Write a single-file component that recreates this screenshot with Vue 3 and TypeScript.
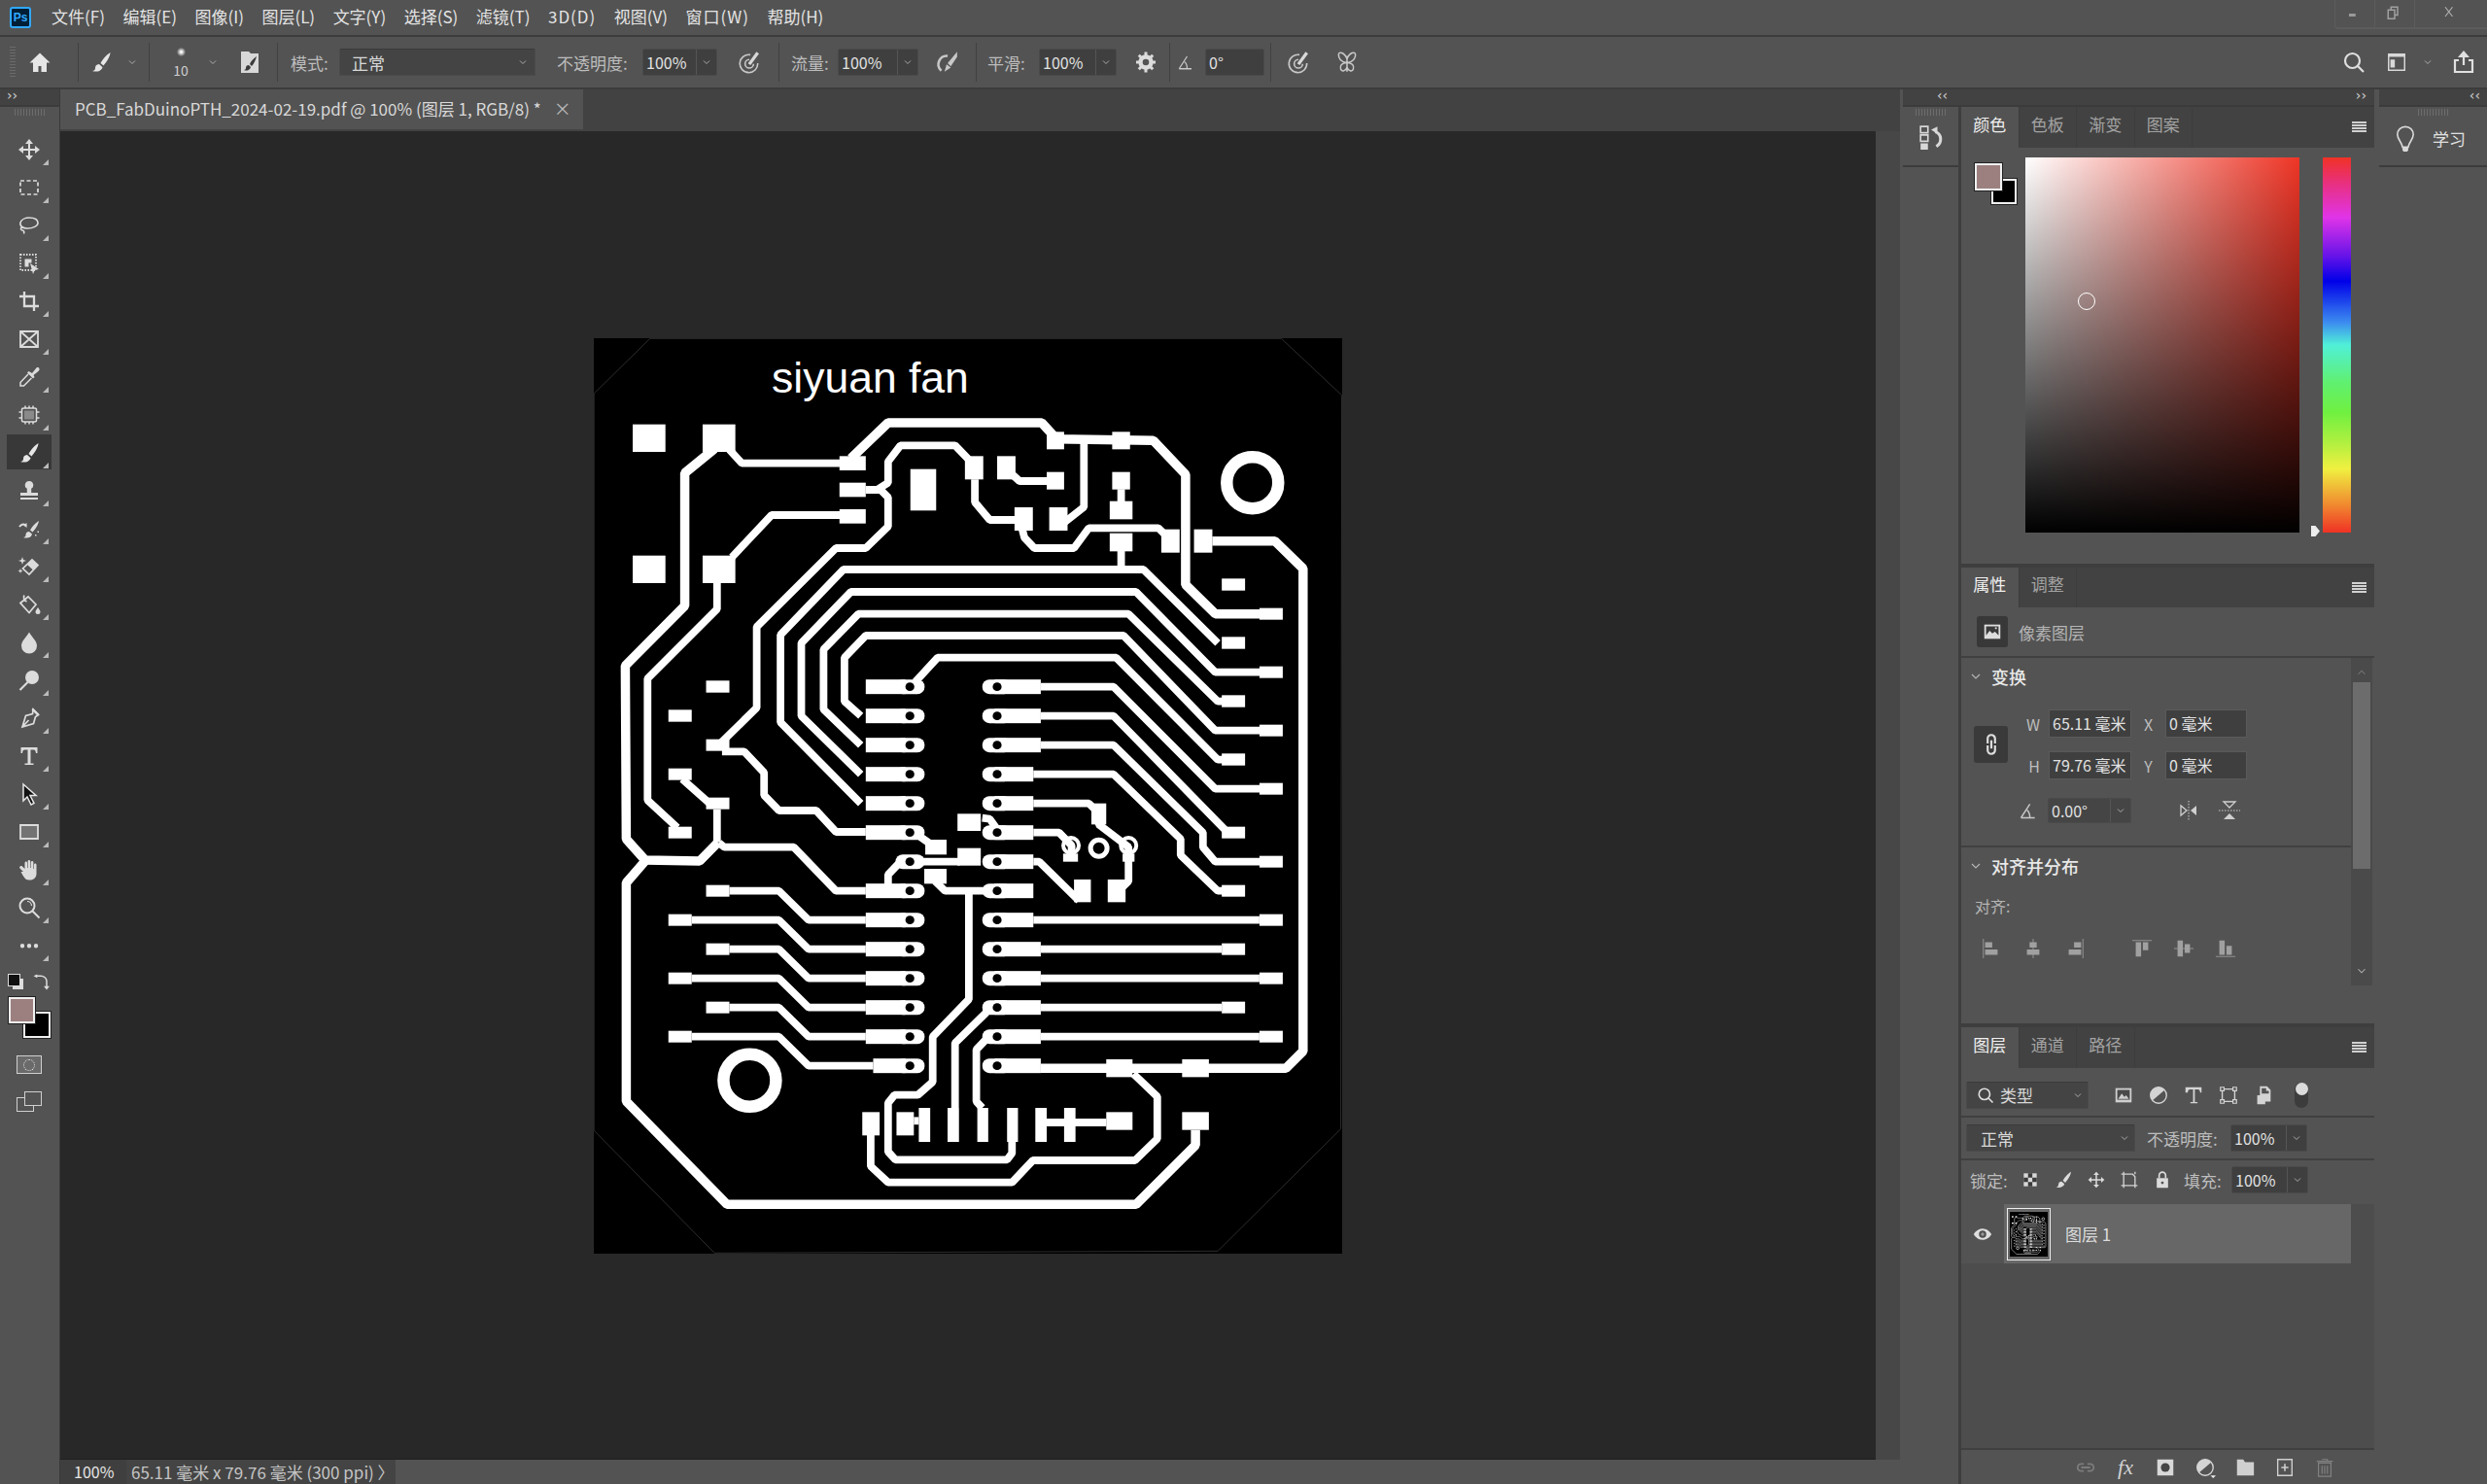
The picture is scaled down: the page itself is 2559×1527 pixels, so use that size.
<template>
  <div class="app">
    <!-- menu bar -->
    <header class="menubar">
      <div class="ps-logo">Ps</div>
      <nav class="menu">
        <span v-for="m in menus" :key="m">{{ m }}</span>
      </nav>
      <div class="winctl">
        <button class="win-btn"><Ico name="winMin" :size="18" /></button>
        <button class="win-btn"><Ico name="winMax" :size="18" /></button>
        <button class="win-btn"><Ico name="winClose" :size="18" /></button>
      </div>
    </header>

    <!-- tool options -->
    <section class="options">
      <div class="og og-home"><i class="grip-v"></i><Ico name="home" :size="24" /></div>
      <div class="og og-brush"><Ico name="brush" :size="24" /><Ico name="chev" :size="12" /></div>
      <div class="og og-preset">
        <div class="preset"><i class="dot"></i><span>10</span></div>
        <Ico name="chev" :size="12" />
        <Ico class="toggle" name="paperBrush" :size="24" />
      </div>
      <div class="og og-mode">
        <span class="lbl lbl-mode">模式:</span>
        <div class="sel sel-mode"><span>正常</span><Ico name="chev" :size="12" /></div>
        <span class="lbl lbl-op">不透明度:</span>
        <div class="num num-op"><b>100%</b><em><Ico name="chev" :size="12" /></em></div>
        <Ico class="push" name="airTarget" :size="26" />
      </div>
      <div class="og og-flow">
        <span class="lbl lbl-flow">流量:</span>
        <div class="num num-flow"><b>100%</b><em><Ico name="chev" :size="12" /></em></div>
        <Ico class="push-sm" name="airbrush" :size="26" />
      </div>
      <div class="og og-smooth">
        <span class="lbl lbl-smooth">平滑:</span>
        <div class="num num-smooth"><b>100%</b><em><Ico name="chev" :size="12" /></em></div>
        <Ico class="push-sm" name="gear" :size="24" />
      </div>
      <div class="og og-angle">
        <Ico name="angle" :size="18" />
        <div class="num num-angle"><b>0°</b></div>
      </div>
      <div class="og og-sym">
        <Ico name="airTarget" :size="26" />
        <Ico name="butterfly" :size="26" />
      </div>
      <div class="og-right">
        <Ico name="search" :size="24" />
        <Ico class="ws" name="workspace" :size="22" />
        <Ico class="ws-chev" name="chev" :size="12" />
        <Ico class="shr" name="share" :size="24" />
      </div>
    </section>

    <main class="work">
      <!-- toolbox -->
      <aside class="toolbox">
        <div class="collapse collapse-l"><span>››</span></div>
        <i class="grip-h"></i>
        <div class="tools">
          <div v-for="t in tools" :key="t" class="tool" :class="{ active: t === 'brush' }">
            <span class="tool-in"><Ico :name="t" :size="24" /></span>
          </div>
        </div>
        <div class="swatches">
          <i class="mini-default"></i>
          <Ico class="swap" name="swap" :size="18" />
          <i class="sw sw-bg"></i>
          <i class="sw sw-fg"></i>
        </div>
        <div class="t-mask"><i></i></div>
        <div class="t-screen"><i></i><i></i></div>
      </aside>

      <!-- document area -->
      <section class="center">
        <div class="tabbar">
          <div class="doc-tab">
            <span>PCB_FabDuinoPTH_2024-02-19.pdf @ 100% (图层 1, RGB/8) *</span>
            <em>×</em>
          </div>
        </div>
        <div class="stage">
          <div class="canvas">
            <svg class="board" width="770" height="942" viewBox="611 348 770 942">
              <rect x="611" y="348" width="770" height="942" fill="#000" />
              <polyline :points="outline" fill="none" stroke="#2d2d2d" stroke-width="1" />
              <g id="pcb-art">
                <text x="794" y="404" class="sign" fill="#fff">siyuan fan</text>
                <polyline v-for="(t, i) in tracePoints" :key="'t' + i" :points="t" fill="none" stroke="#fff" :stroke-width="thick.includes(i) ? 9.5 : 7.8" stroke-linejoin="bevel" />
                <rect v-for="(r, i) in padRects" :key="'r' + i" :x="r.x" :y="r.y" :width="r.w" :height="r.h" fill="#fff" />
                <g v-for="(p, i) in pills" :key="'p' + i">
                  <rect :x="p.x" :y="p.y" :width="p.w" height="15" rx="7.5" fill="#fff" />
                  <rect v-if="p.sq" :x="p.sq.x" :y="p.y" :width="p.sq.w" height="15" fill="#fff" />
                  <ellipse :cx="p.hx" :cy="p.y + 7.5" rx="4.6" ry="4.4" fill="#000" />
                </g>
                <ellipse v-for="(c, i) in rings" :key="'c' + i" :cx="c.x" :cy="c.y" :rx="c.r" :ry="c.r" fill="none" stroke="#fff" :stroke-width="c.w" />
              </g>
            </svg>
          </div>
          <div class="vscroll"></div>
        </div>
        <footer class="status">
          <span class="st-zoom">100%</span>
          <span class="st-info">65.11 毫米 x 79.76 毫米 (300 ppi) 〉</span>
        </footer>
      </section>

      <!-- docks -->
      <section class="dock">
        <div class="collapse collapse-dock"><span>‹‹</span><span>››</span></div>
        <div class="dock-cols">
          <div class="mini-col">
            <div class="mini-panel">
              <i class="grip-h grip-c"></i>
              <Ico name="history" :size="26" />
            </div>
          </div>

          <div class="panels">
            <!-- colour -->
            <section class="panel p-color">
              <div class="tabs">
                <span class="tab on">颜色</span><span class="tab">色板</span><span class="tab">渐变</span><span class="tab">图案</span>
                <i class="burger"></i>
              </div>
              <div class="color-body">
                <div class="c-swatches"><i class="sw sw-bg"></i><i class="sw sw-fg"></i></div>
                <div class="picker"><i class="pick-ring"></i></div>
                <div class="hue"><i class="hue-mark"></i></div>
              </div>
            </section>

            <!-- properties -->
            <section class="panel p-props">
              <div class="tabs">
                <span class="tab on">属性</span><span class="tab">调整</span>
                <i class="burger"></i>
              </div>
              <div class="kind">
                <span class="kind-ico"><Ico name="picture" :size="22" /></span>
                <span>像素图层</span>
              </div>
              <div class="props-body">
                <div class="props-main">
                  <div class="sec sec-xform">
                    <h3><Ico name="chev" :size="16" />变换</h3>
                    <div class="wh">
                      <span class="link"><Ico name="link" :size="26" /></span>
                      <div class="wh-grid">
                        <label>W</label><div class="field">65.11 毫米</div>
                        <label class="c">X</label><div class="field">0 毫米</div>
                        <label>H</label><div class="field">79.76 毫米</div>
                        <label class="c">Y</label><div class="field">0 毫米</div>
                      </div>
                    </div>
                    <div class="ang">
                      <Ico name="angle" :size="20" />
                      <div class="num num-ang"><b>0.00°</b><em><Ico name="chev" :size="12" /></em></div>
                      <Ico class="flip" name="flipH" :size="24" />
                      <Ico class="flip2" name="flipV" :size="24" />
                    </div>
                  </div>
                  <div class="sec">
                    <h3><Ico name="chev" :size="16" />对齐并分布</h3>
                    <p class="align-lbl">对齐:</p>
                    <div class="aligns">
                      <Ico v-for="a in aligns" :key="a" :class="{ wide: a === 'aT' }" :name="a" :size="22" />
                    </div>
                  </div>
                </div>
                <div class="pscroll">
                  <Ico name="chevUp" :size="14" />
                  <i class="thumb"></i>
                  <Ico class="down" name="chev" :size="14" />
                </div>
              </div>
            </section>

            <!-- layers -->
            <section class="panel p-layers">
              <div class="tabs">
                <span class="tab on">图层</span><span class="tab">通道</span><span class="tab">路径</span>
                <i class="burger"></i>
              </div>
              <div class="row r-filter">
                <div class="sel sel-type"><Ico name="search" :size="18" /><span>类型</span><Ico class="end" name="chev" :size="12" /></div>
                <div class="filters">
                  <Ico v-for="f in filters" :key="f" :name="f" :size="22" />
                </div>
                <div class="fswitch"><i></i></div>
              </div>
              <div class="row r-blend">
                <div class="sel sel-blend"><span>正常</span><Ico class="end" name="chev" :size="12" /></div>
                <span class="lbl lbl-op2">不透明度:</span>
                <div class="num num-lay"><b>100%</b><em><Ico name="chev" :size="12" /></em></div>
              </div>
              <div class="row r-lock">
                <span class="lbl">锁定:</span>
                <div class="locks"><Ico v-for="l in locks" :key="l" :name="l" :size="20" /></div>
                <span class="lbl lbl-fill">填充:</span>
                <div class="num num-lay"><b>100%</b><em><Ico name="chev" :size="12" /></em></div>
              </div>
              <div class="list">
                <div class="layer-row">
                  <span class="eye"><Ico name="eye" :size="20" /></span>
                  <div class="layer">
                    <span class="thumbw">
                      <svg width="39" height="46" viewBox="611 348 770 942" preserveAspectRatio="none"><rect x="611" y="348" width="770" height="942" fill="#000" /><use href="#pcb-art" /></svg>
                    </span>
                    <span class="lname">图层 1</span>
                  </div>
                </div>
              </div>
              <footer class="lfoot">
                <Ico name="chain" :size="22" />
                <span class="fx">fx</span>
                <Ico name="mask" :size="22" />
                <Ico name="adjust" :size="22" />
                <Ico name="folder" :size="22" />
                <Ico name="newLayer" :size="22" />
                <Ico name="trash" :size="22" />
              </footer>
            </section>
          </div>
        </div>
      </section>

      <aside class="learn">
        <div class="collapse collapse-r"><span>‹‹</span></div>
        <div class="learn-panel">
          <i class="grip-h grip-c"></i>
          <div class="learn-in"><Ico name="bulb" :size="28" /><span>学习</span></div>
        </div>
      </aside>
    </main>
  </div>
</template>

<script setup lang="ts">
import { h, type FunctionalComponent } from 'vue'

// one icon = a filled part (f) and/or a stroked part (s)
interface Part { f?: string; s?: string; w?: number; dash?: string; fc?: string; bg?: string; c?: string }

const brushF = 'M21.5 2c-3.5 2-8 7-10 11l3 2.5c3-3.5 7-9.5 7-13.5zM10 14c-3 .2-4 2-4 4 0 1.800-1 2.800-3 3 3 1.200 9 1 10.500-3.800z'

const icons: Record<string, Part[]> = {
  winMin: [{ f: 'M4 12h9v4H4z', fc: '#9a9a9a' }],
  winMax: [{ s: 'M7 7V3h9v11h-4M3 7h9v12H3z', w: 2, c: '#a0a0a0' }],
  winClose: [{ s: 'M4 3l10 13M14 3L4 16', w: 1.6, c: '#b0b0b0' }],
  chev: [{ s: 'M6 9l6 6 6-6', w: 1.8, c: '#b4b4b4' }],
  chevUp: [{ s: 'M6 15l6-6 6 6', w: 1.8, c: '#777' }],
  home: [{ f: 'M12 2.500L1.500 12.500H5V22h5.500v-6h3v6H19v-9.500h3.500z', fc: '#e6e6e6' }],
  brush: [{ f: brushF, fc: '#e6e6e6' }],
  paperBrush: [{ f: 'M3 1h8l2 2h8v20H3z', fc: '#d8d8d8' }, { f: 'M19 6c-3 2-6 5-7 8l2 2c2-2 4-6 5-10zM11 15c-2 0-3 1-3 3 0 1-1 2-2 2 2 1 6 1 7-3z', fc: '#3a3a3a' }],
  airTarget: [{ s: 'M13 5a8.500 8.500 0 1 0 7 8M12 9.500a4 4 0 1 0 4 4', w: 1.5, c: '#c8c8c8' }, { s: 'M12 14L20 3', w: 3, c: '#d8d8d8' }],
  airbrush: [{ s: 'M13 6a8 8 0 0 0-6 14', w: 2.400, c: '#c8c8c8' }, { f: 'M22 2l-9 11 3 3 6-9zM12 14l-2 7 6-4z', fc: '#c8c8c8' }],
  gear: [{ s: 'M12 6.500a5.500 5.500 0 1 0 0 11 5.500 5.500 0 0 0 0-11z', w: 4.400, c: '#dcdcdc' }, { s: 'M12 1.500v4M12 18.500v4M2 12h4M18 12h4M4.800 4.800l3 3M16.200 16.200l3 3M19.200 4.800l-3 3M7.800 16.200l-3 3', w: 3, c: '#dcdcdc' }],
  angle: [{ s: 'M3 21h17M3 21L14 4M10.500 11.500c2.500 2 3.500 5 3.500 9.500', w: 1.700, c: '#c8c8c8' }],
  butterfly: [{ s: 'M12 6v15M12 9C10 3 4 1 4 5c0 3 2 7 8 7.500M12 9c2-6 8-8 8-4 0 3-2 7-8 7.500M12 12.500c-5 0-7 3-6 6 1 3 5 2 6-2M12 12.500c5 0 7 3 6 6-1 3-5 2-6-2', w: 1.400, c: '#c8c8c8' }],
  search: [{ s: 'M10.500 3a7.500 7.500 0 1 0 0 15 7.500 7.500 0 0 0 0-15zM16 16l6 6', w: 2.200, c: '#dedede' }],
  workspace: [{ s: 'M3 3h18v18H3z', w: 1.600, c: '#d8d8d8' }, { f: 'M3 3h18v3H3zM5 9h5v9H5z', fc: '#d8d8d8' }],
  share: [{ s: 'M7 10H3v12h18V10h-4M12 15V3', w: 2.200, c: '#e0e0e0' }, { f: 'M12 0l6 7H6z', fc: '#e0e0e0' }],
  move: [{ s: 'M12 4v16M4 12h16', w: 2 }, { f: 'M12 1l4 5H8zM12 23l-4-5h8zM1 12l5-4v8zM23 12l-5 4V8z' }],
  marquee: [{ s: 'M3 5h18v14H3z', w: 1.700, dash: '4 2.500' }],
  lasso: [{ s: 'M12 4c6 0 9 2.500 9 5.500S16 15 10 15c-4 0-8-2-7-6 1-3 5-5 9-5zM5 13.500c-3 1.500-1 3.500 0 3.500 2 0 2 2 1.500 3.500', w: 1.600 }],
  select: [{ s: 'M3 3h16v16H3z', w: 1.800, dash: '1.500 1.500' }, { f: 'M7.500 7.500h7v4l-3 0v4h-4z' }, { f: 'M13 12l9 6-4.200.8L16 23z' }],
  crop: [{ s: 'M7 2v15h15M2 7h15v15', w: 2.300 }],
  frame: [{ s: 'M3 4h18v16H3zM3 4l18 16M21 4L3 20', w: 1.800 }],
  dropper: [{ f: 'M15 8l4.500-5.500c1-1 3-.5 3 1.500 0 1-.5 1.500-1 2L16.500 10l1 2-1.500 1.500-6-6L11.500 6z' }, { s: 'M11 9l-8 8.500V21h3.500L14.500 13', w: 1.500 }],
  heal: [{ f: 'M7 7.500h10v9H7z', fc: '#8a8a8a' }, { s: 'M4.500 6.500c0-1 1-1.500 2-1.500h11c1 0 2 .5 2 1.500v11c0 1-1 1.500-2 1.500h-11c-1 0-2-.5-2-1.500zM8 2.500V5M12 2.500V5M16 2.500V5M8 19v2.500M12 19v2.500M16 19v2.500M1.500 9H4.500M1.500 15H4.500M19.500 9h3M19.500 15h3', w: 1.500 }],
  stamp: [{ f: 'M12 2a4.200 4.200 0 0 1 2.200 7.800V14H21v3H3v-3h6.800V9.800A4.200 4.200 0 0 1 12 2zM3 19h18v2H3z' }],
  histbrush: [{ f: 'M22 4c-3 1.500-7 6-9 9.500l2.500 2c3-3 6-8 6.500-11.500zM12 15c-2.500 0-3.500 1.500-3.500 3.500 0 1.500-1 2.500-2.500 2.500 3 1 8 1 9-3.500z' }, { s: 'M2 10c2-3 5-3.500 7-1', w: 2 }, { f: 'M9.500 6v5L6 8.500zM18 18h1.500v1.500H18zM20.500 14.500H22V16h-1.500z' }],
  eraser: [{ f: 'M15 5l6 5.500-5 5-6-5.500z' }, { s: 'M15 5l6 5.500-9 9.500-6.500-6z', w: 1.700 }, { f: 'M5 2l1 3 3 1-3 1-1 3-1-3-3-1 3-1zM3 14l.7 1.800 1.800.7-1.800.7L3 19l-.7-1.800-1.800-.7 1.800-.7z' }],
  bucket: [{ s: 'M3 10.500L11 4l8 8-7 8.500zM7 2.500c-1.500 2.500 0 5.500 2.500 6.500', w: 1.700 }, { f: 'M21 15c1 1.800 2.500 3.200 2.500 4.500a2.500 2.500 0 0 1-5 0c0-1.300 1.500-2.700 2.500-4.500z' }],
  drop: [{ f: 'M12 1.500c3 5.500 8 9 8 14a8 8 0 0 1-16 0c0-5 5-8.500 8-14z' }],
  dodge: [{ f: 'M15 2a7 7 0 1 1 0 14 7 7 0 0 1 0-14z' }, { s: 'M10.500 14L2.500 22', w: 2.200 }],
  pen: [{ s: 'M16 3l5.500 5.500-3 2-2 7L5 21l3.500-11.500 7-2zM5 21l6.500-7', w: 1.700 }, { f: 'M16 1.500l6.500 6.500-2 1.500L14.500 3.500z' }],
  type: [{ f: 'M3.500 3h17v6H19c-.3-2.500-1-3.500-2.500-3.500h-3V19.500h3V21H7.500v-1.500h3V5.500h-3C6 5.500 5.300 6.500 5 9H3.500z' }],
  path: [{ f: 'M6 2l13 11.500h-6l4 8-3 1.500-4-8L6 19z', fc: '#111' }, { s: 'M6 2l13 11.500h-6l4 8-3 1.500-4-8L6 19z', w: 1.500, c: '#e6e6e6' }],
  rect: [{ s: 'M3 5h18v14H3z', w: 1.800, bg: '#737373' }],
  hand: [{ f: 'M6 14l-3.500-3.500c-1.200-1.300.8-3.300 2.200-2.200L7.500 11V5c0-2 2.500-2 2.500 0v5h.6V3.500c0-2 2.600-2 2.600 0V10h.6V4.500c0-2 2.600-2 2.600 0V11h.6V7c0-2 2.500-2 2.500 0v9c0 4-3 6.500-6.500 6.500h-1.500c-3.500 0-5-3-8-8.500z' }],
  zoom: [{ s: 'M10 2.500a7.500 7.500 0 1 0 0 15 7.500 7.500 0 0 0 0-15zM15.500 15.500l7 7', w: 2 }, { s: 'M10 5.500a4.500 4.500 0 0 1 4.500 4.500', w: 1.200 }],
  more: [{ f: 'M5 10a2.200 2.200 0 1 1 0 4.400A2.200 2.200 0 0 1 5 10zM12 10a2.200 2.200 0 1 1 0 4.400A2.200 2.200 0 0 1 12 10zM19 10a2.200 2.200 0 1 1 0 4.400A2.200 2.200 0 0 1 19 10z' }],
  swap: [{ f: 'M2 3l5-2.500v5zM20 22l-4-5h8z', fc: '#ddd' }, { s: 'M6 3h6c4 0 8 3 8 7v8', w: 2, c: '#ddd' }],
  history: [{ s: 'M2 2h7v6H2zM2 10h7v6H2z', w: 1.500, c: '#d8d8d8' }, { f: 'M2 18h7v6H2z', fc: '#d8d8d8' }, { s: 'M16 7c6 2 7 10 1 14', w: 2.800, c: '#d8d8d8' }, { f: 'M12 5l6-3v7z', fc: '#d8d8d8' }],
  bulb: [{ s: 'M12 2c-4 0-7 3-7 7 0 4 4 7 4.500 11h5C15 16 19 13 19 9c0-4-3-7-7-7z', w: 1.400, c: '#d8d8d8' }, { f: 'M9.500 20.500h5V23l-1.500 1.500h-2L9.500 23z', fc: '#d8d8d8' }],
  picture: [{ f: 'M3 4h18v16H3z', fc: '#dedede' }, { f: 'M5 6h14v10H5z', fc: '#3a3a3a' }, { f: 'M5 16l4-5 3 3 3-2 4 4v1H5zM15 7h2v2h-2z', fc: '#dedede' }],
  link: [{ s: 'M8.500 11V6.500a3.500 3.500 0 0 1 7 0V11M8.500 13v4.500a3.500 3.500 0 0 0 7 0V13M12 8v8', w: 2, c: '#dedede' }],
  flipH: [{ s: 'M4 7v10l6-5z', w: 1.300, c: '#cfcfcf' }, { f: 'M20 7v10l-6-5z', fc: '#cfcfcf' }, { s: 'M12 2v20', w: 1, dash: '1.500 1.500', c: '#cfcfcf' }],
  flipV: [{ s: 'M6 3h12l-6 6z', w: 1.300, c: '#cfcfcf' }, { f: 'M6 21h12l-6-6z', fc: '#cfcfcf' }, { s: 'M1 12h22', w: 1, dash: '1.500 1.500', c: '#cfcfcf' }],
  aL: [{ s: 'M3 1v22', w: 1.200, c: '#8e8e8e' }, { f: 'M5 5h8v6H5zM5 13h14v6H5z', fc: '#a0a0a0' }],
  aC: [{ s: 'M12 1v22', w: 1.200, c: '#8e8e8e' }, { f: 'M8 5h8v6H8zM5 13h14v6H5z', fc: '#a0a0a0' }],
  aR: [{ s: 'M21 1v22', w: 1.200, c: '#8e8e8e' }, { f: 'M11 5h8v6h-8zM5 13h14v6H5z', fc: '#a0a0a0' }],
  aT: [{ s: 'M1 3h22', w: 1.200, c: '#8e8e8e' }, { f: 'M5 5h6v16H5zM13 5h6v9h-6z', fc: '#a0a0a0' }],
  aM: [{ s: 'M1 12h22', w: 1.200, c: '#8e8e8e' }, { f: 'M5 3h6v18H5zM13 7h6v10h-6z', fc: '#a0a0a0' }],
  aB: [{ s: 'M1 21h22', w: 1.200, c: '#8e8e8e' }, { f: 'M5 3h6v16H5zM13 9h6v10h-6z', fc: '#a0a0a0' }],
  fImage: [{ f: 'M3 4h18v16H3z', fc: '#cfcfcf' }, { f: 'M5 6h14v11H5z', fc: '#4a4a4a' }, { f: 'M6 16l4-6 3 4 2-2 3 4z', fc: '#cfcfcf' }],
  fAdjust: [{ s: 'M12 3a9 9 0 1 0 0 18 9 9 0 0 0 0-18z', w: 1.500, c: '#d4d4d4' }, { f: 'M19 6A9 9 0 0 0 5 18z', fc: '#d4d4d4' }],
  fType: [{ f: 'M3 3h18v6h-1.500c-.3-2.500-1-3.500-2.500-3.500h-3.500V19.500h3V21H8.500v-1.500h3V5.500H8C6.500 5.500 5.800 6.500 5.500 9H3z', fc: '#d4d4d4' }],
  fShape: [{ s: 'M5 5h14v14H5z', w: 1.500, c: '#d4d4d4' }, { s: 'M3 3h4v4H3zM17 3h4v4h-4zM3 17h4v4H3zM17 17h4v4h-4z', w: 1.300, c: '#d4d4d4', bg: '#535353' }],
  fSmart: [{ f: 'M8 2h8l4 4v13h-6v3H5V12h3z', fc: '#d4d4d4' }, { f: 'M10 4h5v3h3v3h-8z', fc: '#535353' }],
  lPixels: [{ f: 'M4 4h16v16H4z', fc: '#d8d8d8' }, { f: 'M9.300 4h5.300v5.300H9.300zM4 9.300h5.300v5.300H4zM14.600 9.300H20v5.300h-5.400zM9.300 14.600h5.300V20H9.300z', fc: '#3a3a3a' }],
  lBrush: [{ f: brushF, fc: '#dcdcdc' }],
  lMove: [{ s: 'M12 5v14M5 12h14', w: 1.800, c: '#dcdcdc' }, { f: 'M12 2l3.500 4h-7zM12 22l-3.500-4h7zM2 12l4-3.500v7zM22 12l-4 3.500v-7z', fc: '#dcdcdc' }],
  lBoard: [{ s: 'M5 5h11l3 3v11H5zM5 2v3M2 5h3M19 19v3M19 19h3M2 19h3M5 19v3M19 2v3', w: 1.600, c: '#d4d4d4' }],
  lLock: [{ f: 'M5 10h14v12H5zM12 14a1.700 1.700 0 1 0 0 3.400A1.700 1.700 0 0 0 12 14z', fc: '#dcdcdc' }, { s: 'M8 10V6.500a4 4 0 0 1 8 0V10', w: 2, c: '#dcdcdc' }],
  eye: [{ f: 'M12 5C7 5 3 8.500 1 12c2 3.500 6 7 11 7s9-3.500 11-7c-2-3.500-6-7-11-7z', fc: '#dedede' }, { f: 'M12 7.500a4.500 4.500 0 1 0 0 9 4.500 4.500 0 0 0 0-9z', fc: '#4f4f4f' }, { f: 'M12 10a2 2 0 1 0 0 4 2 2 0 0 0 0-4z', fc: '#9a9a9a' }],
  chain: [{ s: 'M10 8H7a4 4 0 0 0 0 8h3M14 8h3a4 4 0 0 1 0 8h-3M7 12h10', w: 2, c: '#7c7c7c' }],
  mask: [{ f: 'M3 3h18v18H3z', fc: '#d8d8d8' }, { f: 'M12 7a5 5 0 1 0 0 10 5 5 0 0 0 0-10z', fc: '#444' }],
  adjust: [{ s: 'M12 3a9 9 0 1 0 0 18 9 9 0 0 0 0-18z', w: 1.500, c: '#d4d4d4' }, { f: 'M19 6A9 9 0 0 0 5 18z', fc: '#d4d4d4' }, { f: 'M18 21h6l-3 3z', fc: '#eee' }],
  folder: [{ f: 'M3 3h7l2 3h10v15H3z', fc: '#d0d0d0' }],
  newLayer: [{ s: 'M4 3h16v18H4z', w: 1.500, c: '#d0d0d0' }, { s: 'M12 8v8M8 12h8', w: 1.700, c: '#d0d0d0' }],
  trash: [{ s: 'M5 7h14v15H5zM3 5h18M9 3h6v2M9 10v9M12 10v9M15 10v9', w: 1.300, c: '#828282' }]
}

const Ico: FunctionalComponent<{ name: string; size?: number }> = (p) =>
  h('svg', { width: p.size ?? 24, height: p.size ?? 24, viewBox: '0 0 24 24', style: 'flex:none;display:block' },
    (icons[p.name] ?? []).flatMap((part) => {
      const out = []
      if (part.f) out.push(h('path', { d: part.f, fill: part.fc ?? '#dcdcdc', 'fill-rule': 'evenodd' }))
      if (part.s) out.push(h('path', { d: part.s, fill: part.bg ?? 'none', stroke: part.c ?? '#dcdcdc', 'stroke-width': part.w ?? 1.6, 'stroke-dasharray': part.dash }))
      return out
    }))
Ico.props = ['name', 'size']

const menus = ['文件(F)', '编辑(E)', '图像(I)', '图层(L)', '文字(Y)', '选择(S)', '滤镜(T)', '3D(D)', '视图(V)', '窗口(W)', '帮助(H)']
const tools = ['move', 'marquee', 'lasso', 'select', 'crop', 'frame', 'dropper', 'heal', 'brush', 'stamp', 'histbrush', 'eraser', 'bucket', 'drop', 'dodge', 'pen', 'type', 'path', 'rect', 'hand', 'zoom', 'more']
const aligns = ['aL', 'aC', 'aR', 'aT', 'aM', 'aB']
const filters = ['fImage', 'fAdjust', 'fType', 'fShape', 'fSmart']
const locks = ['lPixels', 'lBrush', 'lMove', 'lBoard', 'lLock']

// board artwork, measured on a stretched crop: u/1.96 and v/3 give real pixels
const X = (u: number) => 600 + u / 1.96
const Y = (v: number) => 340 + v / 3
const toPts = (a: number[]) => {
  const out: string[] = []
  for (let i = 0; i < a.length; i += 2) out.push(`${X(a[i]).toFixed(1)},${Y(a[i + 1]).toFixed(1)}`)
  return out.join(' ')
}

const outline = toPts([135, 25, 22, 195, 22, 2470, 265, 2848, 1280, 2842, 1528, 2465, 1530, 200, 1408, 25, 135, 25])

const traces: number[][] = [
  [540, 410, 320, 410, 295, 368],
  [265, 365, 205, 440, 205, 850, 85, 1035, 87, 1570, 125, 1635, 235, 1638, 272, 1580],
  [270, 780, 270, 860, 130, 1075, 130, 1450, 190, 1535],
  [300, 700, 380, 570, 520, 570],
  [540, 395, 615, 285, 925, 285, 955, 335, 1150, 340, 1215, 445, 1215, 785, 1275, 875, 1370, 875],
  [595, 490, 615, 470, 615, 405, 640, 355, 750, 355, 785, 410],
  [790, 460, 790, 530, 820, 585, 880, 585],
  [570, 492, 600, 492, 615, 515, 615, 605, 570, 672, 510, 672, 350, 915, 350, 1165, 270, 1285],
  [280, 1300, 325, 1300, 365, 1365, 365, 1435, 395, 1482, 470, 1482, 510, 1548, 570, 1548],
  [1010, 345, 1010, 545, 960, 605],
  [855, 430, 880, 465, 950, 465],
  [885, 610, 890, 640, 910, 672, 990, 672, 1020, 610, 1160, 610, 1180, 640],
  [1085, 490, 1085, 530],
  [1085, 680, 1085, 738],
  [1280, 965, 1130, 738, 525, 738, 398, 940, 398, 1210, 560, 1460],
  [1370, 1055, 1275, 1055, 1115, 807, 540, 807, 440, 965, 440, 1190, 560, 1370],
  [1300, 1145, 1280, 1145, 1100, 875, 555, 875, 485, 985, 485, 1170, 560, 1280],
  [1370, 1235, 1275, 1235, 1090, 942, 570, 942, 527, 1010, 527, 1145, 560, 1190],
  [670, 1085, 715, 1010, 1075, 1010, 1280, 1325, 1300, 1325],
  [923, 1100, 1070, 1100, 1275, 1415, 1370, 1415],
  [923, 1190, 1070, 1190, 1300, 1550],
  [923, 1280, 1070, 1280, 1250, 1550, 1250, 1595, 1275, 1640, 1370, 1640],
  [908, 1370, 1070, 1370, 1205, 1570, 1205, 1620, 1280, 1730, 1300, 1730],
  [1269, 650, 1395, 650, 1452, 735, 1452, 2225, 1417, 2278, 923, 2278],
  [908, 1460, 1020, 1460, 1040, 1490, 1040, 1525, 1100, 1595, 1100, 1700, 1080, 1730],
  [908, 1550, 960, 1550, 985, 1590, 985, 1630],
  [908, 1640, 920, 1640, 1000, 1760],
  [805, 1505, 820, 1508, 835, 1540],
  [680, 1640, 760, 1640],
  [672, 1555, 710, 1595],
  [640, 1640, 615, 1680, 615, 1725],
  [710, 1700, 730, 1730, 820, 1730],
  [778, 1730, 778, 2065, 705, 2180, 705, 2320, 675, 2360, 628, 2360, 615, 2385, 615, 2535, 630, 2560, 855, 2560, 865, 2540, 865, 2505],
  [820, 2095, 750, 2200, 750, 2400],
  [815, 2185, 793, 2220, 793, 2380, 805, 2400],
  [200, 1385, 255, 1460],
  [270, 1478, 270, 1580],
  [274, 1582, 285, 1595, 425, 1595, 510, 1730, 570, 1730],
  [295, 1730, 395, 1730, 455, 1820, 570, 1820],
  [219, 1820, 395, 1820, 455, 1910, 570, 1910],
  [295, 1910, 395, 1910, 455, 2000, 570, 2000],
  [219, 2000, 395, 2000, 455, 2090, 570, 2090],
  [295, 2090, 395, 2090, 455, 2180, 570, 2180],
  [219, 2180, 395, 2180, 455, 2270, 585, 2270],
  [908, 1820, 1364, 1820],
  [923, 1910, 1288, 1910],
  [923, 2000, 1364, 2000],
  [923, 2090, 1288, 2090],
  [923, 2180, 1364, 2180],
  [1110, 2295, 1158, 2365, 1158, 2495, 1113, 2562, 907, 2562, 865, 2630, 615, 2630, 580, 2580, 580, 2480],
  [1235, 2468, 1235, 2515, 1115, 2698, 290, 2698, 87, 2380, 87, 1705, 125, 1638],
  [935, 2445, 1055, 2445],
  [667, 2440, 677, 2440]
]

// the outer ring of traces is a bit heavier than the rest
const thick = [1, 4, 23, 50]

const pads: number[][] = [
  [100, 290, 166, 375], [241, 290, 307, 375], [100, 695, 166, 780], [241, 695, 307, 780],
  [517, 388, 570, 432], [517, 470, 570, 514], [517, 552, 570, 596], [660, 428, 712, 556],
  [770, 388, 807, 460], [835, 388, 872, 460], [935, 313, 970, 367], [935, 437, 970, 491],
  [1067, 313, 1103, 367], [1067, 437, 1103, 491], [1062, 527, 1108, 583], [1062, 626, 1108, 682],
  [870, 546, 907, 618], [940, 546, 977, 618], [1166, 614, 1203, 686], [1232, 614, 1269, 686],
  [1364, 857, 1411, 893], [1288, 946, 1335, 983], [1364, 1037, 1411, 1073], [1288, 1126, 1335, 1163],
  [1364, 1217, 1411, 1253], [1288, 1306, 1335, 1343], [1364, 1397, 1411, 1433], [1288, 1532, 1335, 1568],
  [1364, 1622, 1411, 1658], [1288, 1712, 1335, 1748], [1364, 1802, 1411, 1838], [1288, 1892, 1335, 1928],
  [1364, 1982, 1411, 2018], [1288, 2072, 1335, 2108], [1364, 2162, 1411, 2198], [1288, 766, 1335, 803],
  [248, 1081, 295, 1118], [172, 1171, 219, 1208], [248, 1262, 295, 1298], [172, 1352, 219, 1388],
  [248, 1442, 295, 1478], [172, 1532, 219, 1568],
  [248, 1712, 295, 1748], [172, 1802, 219, 1838], [248, 1892, 295, 1928], [172, 1982, 219, 2018],
  [248, 2072, 295, 2108], [172, 2162, 219, 2198],
  [1025, 1460, 1055, 1525], [755, 1492, 802, 1545], [755, 1598, 802, 1652], [690, 1572, 733, 1618],
  [688, 1662, 733, 1708], [1058, 1695, 1094, 1765], [990, 1695, 1024, 1765], [968, 1615, 998, 1640],
  [1088, 1615, 1112, 1640],
  [1055, 2250, 1108, 2305], [1208, 2250, 1262, 2305], [563, 2413, 598, 2485], [632, 2413, 667, 2485],
  [677, 2400, 700, 2505], [735, 2400, 758, 2505], [795, 2400, 817, 2505], [855, 2400, 877, 2505],
  [912, 2400, 935, 2505], [970, 2400, 993, 2505], [1055, 2413, 1108, 2468], [1208, 2413, 1262, 2468]
]

const tracePoints = traces.map(toPts)
const padRects = pads.map(([a, b, c, d]) => ({ x: X(a), y: Y(b), w: X(c) - X(a), h: Y(d) - Y(b) }))

const rows = [1100, 1190, 1280, 1370, 1460, 1550, 1640, 1730, 1820, 1910, 2000, 2090, 2180, 2270]
const rightEnds = [923, 923, 923, 908, 908, 908, 908, 908, 908, 923, 923, 923, 923, 923]
const pills = [
  ...rows.map((v, i) => {
    const from = i === 6 ? null : (i === 13 ? 585 : 570)
    return {
      x: X(630), y: Y(v) - 7.5, w: 30, hx: X(659),
      sq: from === null ? null : { x: X(from), w: X(650) - X(from) }
    }
  }),
  ...rows.map((v, i) => ({
    x: X(805), y: Y(v) - 7.5, w: 30, hx: X(835),
    sq: { x: X(830), w: X(rightEnds[i]) - X(830) }
  }))
]

const rings = [
  { x: X(1350), y: Y(470), r: 26.5, w: 12.5 },
  { x: X(336), y: Y(2315), r: 27, w: 12.5 },
  { x: X(1040), y: Y(1598), r: 8.5, w: 5 },
  { x: X(984), y: Y(1590), r: 8, w: 4 },
  { x: X(1100), y: Y(1590), r: 8, w: 4 }
]
</script>

<style>
html, body { margin: 0; background: #535353; }
</style>

<style scoped>
.app {
  width: 2559px;
  height: 1527px;
  display: flex;
  flex-direction: column;
  overflow: hidden;
  background: #535353;
  color: #dcdcdc;
  font-family: "Noto Sans CJK SC", "Noto Sans", sans-serif;
  font-size: 16px;
}
i, em { font-style: normal; display: block; }
b { font-weight: 400; }

/* menu */
.menubar {
  height: 36px;
  flex: none;
  display: flex;
  align-items: center;
  border-bottom: 2px solid #3c3c3c;
  position: relative;
}
.ps-logo {
  margin-left: 10px;
  width: 18px;
  height: 18px;
  border: 2px solid #31a8ff;
  border-radius: 3px;
  background: #001e36;
  color: #31a8ff;
  font-size: 12px;
  line-height: 18px;
  text-align: center;
  font-family: "Liberation Sans", sans-serif;
  font-weight: 700;
}
.menu { display: flex; gap: 18.5px; margin-left: 21px; padding-bottom: 3px; font-size: 17px; color: #e4e4e4; }
.menu span:nth-child(8) { letter-spacing: 1px; }
.menu span:nth-child(10) { letter-spacing: 1px; }
.winctl { margin-left: auto; display: flex; height: 28px; align-self: flex-start; border: 1px solid #5c5c5c; border-width: 0 0 2px 1px; border-radius: 0 0 0 4px; }
.win-btn { width: 41px; padding: 0; background: none; border: 0; border-right: 1px solid #5c5c5c; display: flex; align-items: center; justify-content: center; }
.win-btn:last-child { border-right: 0; width: 74px; }

/* options */
.options {
  height: 52px;
  flex: none;
  display: flex;
  align-items: center;
  border-bottom: 2px solid #3c3c3c;
}
.og {
  height: 40px;
  display: flex;
  align-items: center;
  flex: none;
  border-right: 1px solid #414141;
  box-sizing: border-box;
}
.og-home { width: 81px; padding-left: 10px; gap: 13px; }
.grip-v { width: 6px; height: 32px; background: repeating-linear-gradient(to bottom, #6b6b6b 0 1px, transparent 1px 3px); }
.og-brush { width: 73px; padding-left: 11px; gap: 14px; }
.og-preset { width: 132px; padding-left: 16px; gap: 11px; }
.preset { width: 32px; display: flex; flex-direction: column; align-items: center; font-size: 14px; line-height: 16px; color: #cfcfcf; gap: 6px; }
.dot { width: 9px; height: 9px; border-radius: 50%; background: radial-gradient(circle, #fff 10%, rgba(255,255,255,0) 75%); }
.toggle { margin-left: 9px; }
.og-mode { width: 516px; padding-left: 13px; gap: 10px; }
.lbl { color: #bdbdbd; font-size: 17px; white-space: nowrap; }
.lbl-mode { width: 40px; }
.sel {
  display: flex;
  align-items: center;
  height: 28px;
  box-sizing: border-box;
  background: #444;
  border: 1px solid #4a4a4a;
  border-top-color: #3a3a3a;
  border-radius: 2px;
  color: #d8d8d8;
  font-size: 17px;
}
.sel-mode { width: 202px; padding: 0 6px 0 12px; justify-content: space-between; }
.lbl-op { width: 78px; margin-left: 12px; }
.num { display: flex; height: 28px; background: #3f3f3f; border: 1px solid #4a4a4a; border-radius: 2px; box-sizing: border-box; align-items: center; }
.num b { flex: 1; padding-left: 3px; color: #e2e2e2; font-size: 16px; line-height: 26px; white-space: nowrap; }
.num em { width: 20px; height: 100%; border-left: 1px solid #555; display: flex; align-items: center; justify-content: center; }
.num-op { width: 77px; }
.push { margin-left: 10px; }
.og-flow { width: 203px; padding-left: 12px; gap: 8px; }
.lbl-flow { width: 40px; }
.num-flow { width: 83px; }
.push-sm { margin-left: 8px; }
.og-smooth { width: 199px; padding-left: 11px; gap: 10px; }
.lbl-smooth { width: 43px; }
.num-smooth { width: 80px; }
.og-angle { width: 104px; padding-left: 7px; gap: 11px; }
.num-angle { width: 61px; }
.og-sym { border-right: 0; padding-left: 15px; gap: 24px; }
.og-right { margin-left: auto; display: flex; align-items: center; padding-right: 12px; }
.ws { margin-left: 21px; }
.ws-chev { margin-left: 15px; }
.shr { margin-left: 19px; }

/* main */
.work { flex: 1; min-height: 0; display: flex; }
.collapse {
  height: 16px;
  flex: none;
  background: #424242;
  border-bottom: 2px solid #3b3b3b;
  font-size: 14px;
  line-height: 13px;
  color: #cfcfcf;
  display: flex;
  font-family: "DejaVu Sans", sans-serif;
}
.grip-h { width: 32px; height: 7px; margin: 2px auto 0; background: repeating-linear-gradient(to right, #6d6d6d 0 1px, transparent 1px 3px); }
.toolbox {
  width: 61px;
  flex: none;
  border-right: 1px solid #3a3a3a;
  display: flex;
  flex-direction: column;
  background: #535353;
}
.collapse-l { padding-left: 7px; }
.tools { margin-top: 15px; display: flex; flex-direction: column; }
.tool { height: 39px; width: 46px; margin-left: 7px; display: flex; align-items: center; justify-content: center; position: relative; }
.tool-in { width: 24px; height: 24px; }
.tool::after { content: ""; position: absolute; right: 3px; bottom: 3px; border: 3px solid transparent; border-right-color: #bbb; border-bottom-color: #bbb; }
.tool.active::before { content: ""; position: absolute; left: 0; right: 0; top: 1px; bottom: 2px; background: #383838; }
.tool-in { position: relative; }
.swatches { position: relative; height: 66px; margin-top: 10px; }
.mini-default { position: absolute; left: 8px; top: 0; width: 11px; height: 11px; background: #111; border: 1px solid #ddd; box-shadow: 4px 4px 0 -1px #ddd; }
.swap { position: absolute; left: 33px; top: 0; }
.sw { position: absolute; box-sizing: border-box; border: 2px solid #f0f0f0; outline: 1px solid #222; }
.swatches .sw-fg { left: 9px; top: 24px; width: 27px; height: 27px; background: #9c8080; }
.swatches .sw-bg { left: 24px; top: 39px; width: 28px; height: 27px; background: #000; }
.t-mask { width: 26px; height: 19px; margin: 18px 0 0 17px; box-sizing: border-box; border: 1.5px solid #cfcfcf; background: #6a6a6a; display: flex; align-items: center; justify-content: center; }
.t-mask i { width: 10px; height: 10px; border-radius: 50%; border: 1.5px dotted #e8e8e8; }
.t-screen { position: relative; height: 21px; margin: 18px 0 0 17px; width: 26px; }
.t-screen i { position: absolute; width: 16px; height: 13px; border: 1.5px solid #cfcfcf; background: #535353; }
.t-screen i:first-child { left: 0; bottom: 0; }
.t-screen i:last-child { right: 0; top: 0; }

/* center */
.center { width: 1893px; flex: none; display: flex; flex-direction: column; }
.tabbar { height: 43px; flex: none; background: #424242; }
.doc-tab {
  width: 538px;
  height: 41px;
  background: #535353;
  display: flex;
  align-items: center;
  padding: 0 0 3px 15px;
  box-sizing: border-box;
  color: #d8d8d8;
  white-space: nowrap;
  font-size: 17px;
}
.doc-tab em { margin-left: 13px; color: #bbb; font-size: 18px; }
.stage { flex: 1; min-height: 0; display: flex; }
.canvas {
  flex: 1;
  background: #282828;
  padding: 213px 0 0 549px;
  border-bottom: 1px solid #1f1f1f;
  box-sizing: border-box;
}
.board { display: block; }
.sign { font-family: "Liberation Sans", sans-serif; font-size: 44.5px; }
.vscroll { width: 25px; background: #474747; }
.status { height: 25px; flex: none; display: flex; background: #535353; font-size: 17px; line-height: 25px; }
.st-zoom { width: 68px; padding-left: 14px; box-sizing: border-box; background: #3f3f3f; color: #e6e6e6; font-size: 16px; }
.st-info { width: 277px; padding-left: 5px; box-sizing: border-box; background: #444; color: #c4c4c4; white-space: nowrap; }

/* dock */
.dock { margin-left: 3px; width: 485px; flex: none; display: flex; flex-direction: column; }
.collapse-dock { justify-content: space-between; padding: 0 8px 0 35px; }
.dock-cols { flex: 1; min-height: 0; display: flex; background: #3e3e3e; }
.mini-col { width: 57px; flex: none; background: #535353; border-right: 3px solid #3e3e3e; box-sizing: content-box; }
.mini-panel { height: 60px; border-bottom: 2px solid #3c3c3c; display: flex; flex-direction: column; align-items: center; }
.mini-panel svg { margin-top: 9px; }
.grip-c { flex: none; }
.panels { width: 425px; flex: none; display: flex; flex-direction: column; gap: 4px; }
.panel { background: #535353; display: flex; flex-direction: column; }
.p-color { height: 470px; }
.p-props { height: 469px; }
.p-layers { flex: 1; min-height: 0; }
.tabs { height: 42px; flex: none; display: flex; background: #424242; position: relative; }
.tab { width: 59.5px; height: 42px; text-align: center; line-height: 36px; font-size: 17px; color: #a2a2a2; border-right: 1px solid #3d3d3d; box-sizing: border-box; }
.tab.on { background: #535353; color: #f0f0f0; }
.burger { position: absolute; right: 8px; top: 15px; width: 15px; height: 11px; background: repeating-linear-gradient(to bottom, #d0d0d0 0 2px, transparent 2px 3px); }
.p-props .tabs { height: 41px; }
.p-props .tab { height: 41px; line-height: 33px; }
.color-body { flex: 1; display: flex; padding: 10px 0 0 14px; }
.c-swatches { position: relative; width: 52px; height: 50px; }
.c-swatches .sw-fg { left: 0; top: 6px; width: 28px; height: 28px; background: #9c8080; }
.c-swatches .sw-bg { left: 17px; top: 22px; width: 26px; height: 26px; background: #000; }
.picker {
  width: 282px;
  height: 386px;
  position: relative;
  background: linear-gradient(to top, #000, rgba(0, 0, 0, 0)), linear-gradient(to right, #fff, #ee3526);
}
.pick-ring { position: absolute; left: 54px; top: 139px; width: 18px; height: 18px; box-sizing: border-box; border: 1px solid #fff; border-radius: 50%; }
.hue {
  width: 29px;
  height: 386px;
  margin-left: 24px;
  position: relative;
  background: linear-gradient(to bottom, #f03225 0%, #e83080 7%, #e034e8 16%, #6a14e8 26%, #0000e8 33%, #3c8cf0 44%, #50f0d8 50%, #60f070 60%, #70f040 68%, #b0f040 76%, #f0f040 83%, #f09030 92%, #f03225 100%);
}
.hue-mark { position: absolute; left: -12px; bottom: -4px; width: 9px; height: 11px; background: #eee; clip-path: polygon(0 0, 50% 0, 100% 50%, 50% 100%, 0 100%); }

.kind { height: 50px; flex: none; border-bottom: 2px solid #404040; display: flex; align-items: center; padding-left: 16px; gap: 11px; color: #b4b4b4; font-size: 17px; }
.kind-ico { width: 32px; height: 32px; background: #383838; border-radius: 3px; display: flex; align-items: center; justify-content: center; }
.props-body { display: flex; height: 337px; }
.props-main { width: 401px; flex: none; }
.pscroll { width: 22px; height: 337px; background: #4a4a4a; display: flex; flex-direction: column; align-items: center; padding-top: 8px; box-sizing: border-box; }
.pscroll .thumb { width: 18px; height: 192px; background: #6c6c6c; margin-top: 3px; }
.pscroll .down { margin-top: auto; margin-bottom: 8px; }
.sec h3 { margin: 0; height: 38px; display: flex; align-items: center; gap: 8px; padding-left: 7px; font-size: 18px; font-weight: 500; color: #e8e8e8; }
.sec-xform { height: 193px; border-bottom: 2px solid #404040; box-sizing: content-box; }
.wh { display: flex; align-items: center; padding: 15px 0 0 13px; gap: 10px; }
.link { width: 35px; height: 38px; background: #3a3a3a; border-radius: 3px; display: flex; align-items: center; justify-content: center; }
.wh-grid { display: grid; grid-template-columns: 32px 85px 35px 84px; grid-auto-rows: 29px; row-gap: 14px; align-items: center; }
.wh-grid label { color: #bdbdbd; font-size: 16px; text-align: right; padding-right: 9px; }
.wh-grid label.c { text-align: center; padding-right: 0; }
.field { height: 29px; box-sizing: border-box; background: #3f3f3f; border: 1px solid #5a5a5a; font-size: 16px; line-height: 27px; padding-left: 3px; color: #e2e2e2; white-space: nowrap; overflow: hidden; }
.ang { display: flex; align-items: center; margin-top: 19px; padding-left: 59px; height: 26px; }
.num-ang { width: 86px; height: 26px; margin-left: 10px; background: #454545; }
.flip { margin-left: 47px; }
.flip2 { margin-left: 18px; }
.align-lbl { margin: 10px 0 0 14px; line-height: 24px; font-size: 16px; color: #b4b4b4; }
.aligns { display: flex; gap: 21px; margin: 21px 0 0 20px; }
.aligns .wide { margin-left: 26px; }

.row { display: flex; align-items: center; flex: none; box-sizing: border-box; padding-left: 5px; }
.r-filter { height: 51px; padding-top: 6px; border-bottom: 2px solid #404040; }
.sel-type { width: 126px; padding: 0 4px 0 10px; gap: 6px; }
.end { margin-left: auto; }
.filters { display: flex; gap: 14px; margin-left: 25px; }
.fswitch { width: 14px; height: 26px; margin-left: 21px; border-radius: 7px; background: #3c3c3c; position: relative; }
.fswitch i { width: 13px; height: 13px; border-radius: 50%; background: #dcdcdc; margin-left: .5px; }
.r-blend { height: 44px; border-bottom: 2px solid #404040; }
.sel-blend { width: 174px; padding: 0 4px 0 14px; }
.lbl-op2 { margin-left: 12px; width: 78px; }
.num-lay { width: 79px; margin-left: 8px; }
.r-lock { height: 45px; padding: 0 0 5px 9px; }
.r-lock .lbl { width: 42px; }
.locks { display: flex; gap: 14px; margin-left: 10px; }
.r-lock .lbl-fill { margin-left: 12px; width: 41px; }
.list { flex: 1; min-height: 0; background: #4d4d4d; }
.layer-row { height: 61px; display: flex; }
.eye { width: 44px; display: flex; align-items: center; justify-content: center; background: #535353; }
.layer { width: 357px; display: flex; align-items: center; background: #676767; }
.thumbw { width: 45px; height: 54px; margin-left: 3px; border: 1px solid #eee; box-sizing: border-box; display: flex; align-items: center; justify-content: center; }
.thumbw svg { display: block; }
.lname { margin-left: 15px; font-size: 17px; color: #dcdcdc; }
.lfoot { height: 35px; flex: none; border-top: 2px solid #404040; display: flex; align-items: center; justify-content: flex-end; gap: 19px; padding-right: 40px; }
.fx { width: 22px; font-family: "Liberation Serif", serif; font-style: italic; font-size: 22px; color: #d4d4d4; text-align: center; }

.learn { margin-left: 5px; width: 111px; flex: none; display: flex; flex-direction: column; background: #535353; }
.collapse-r { justify-content: flex-end; padding-right: 7px; }
.learn-panel { height: 60px; border-bottom: 2px solid #3c3c3c; display: flex; flex-direction: column; }
.learn-in { display: flex; align-items: center; gap: 14px; padding-left: 13px; margin-top: 9px; font-size: 17px; color: #e0e0e0; }
</style>
